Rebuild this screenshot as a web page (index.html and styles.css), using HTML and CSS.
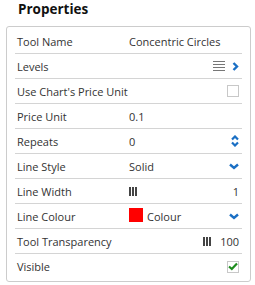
FILE: index.html
```html
<!DOCTYPE html>
<html lang="en">
<head>
    <meta charset="UTF-8">
    <title>Properties</title>
    <link rel="stylesheet" href="styles.css">
</head>
<body>
    <h1>Properties</h1>
    <div class="panel">
        <div class="row">
            <span class="label">Tool Name</span>
            <span class="value">Concentric Circles</span>
        </div>
        <div class="row">
            <span class="label">Levels</span>
            <span class="value"></span>
            <span class="right">
                <svg width="12" height="10" viewBox="0 0 12 10"><path d="M0 0.5H12M0 3.5H12M0 6.5H12M0 9.5H12" stroke="#777" stroke-width="1"/></svg>
                <svg width="7" height="9" viewBox="0 0 7 9"><path d="M1.5 1L5 4.5L1.5 8" fill="none" stroke="#1a6fc4" stroke-width="2.4"/></svg>
            </span>
        </div>
        <div class="row">
            <span class="label">Use Chart's Price Unit</span>
            <span class="value"></span>
            <span class="right"><span class="box"></span></span>
        </div>
        <div class="row">
            <span class="label">Price Unit</span>
            <span class="value">0.1</span>
        </div>
        <div class="row">
            <span class="label">Repeats</span>
            <span class="value">0</span>
            <span class="right">
                <svg width="8" height="12" viewBox="0 0 8 12"><path d="M1 4.5L4 1.5L7 4.5M1 7.5L4 10.5L7 7.5" fill="none" stroke="#1a6fc4" stroke-width="2.2"/></svg>
            </span>
        </div>
        <div class="row">
            <span class="label">Line Style</span>
            <span class="value">Solid</span>
            <span class="right">
                <svg width="10" height="7" viewBox="0 0 10 7"><path d="M1 1.5L5 5L9 1.5" fill="none" stroke="#1a6fc4" stroke-width="2.4"/></svg>
            </span>
        </div>
        <div class="row">
            <span class="label">Line Width</span>
            <span class="value">
                <svg width="8" height="9" viewBox="0 0 8 9"><path d="M1 0V9M4 0V9M7 0V9" stroke="#444" stroke-width="2"/></svg>
            </span>
            <span class="right">1</span>
        </div>
        <div class="row">
            <span class="label">Line Colour</span>
            <span class="value"><span class="swatch"></span>Colour</span>
            <span class="right">
                <svg width="10" height="7" viewBox="0 0 10 7"><path d="M1 1.5L5 5L9 1.5" fill="none" stroke="#1a6fc4" stroke-width="2.4"/></svg>
            </span>
        </div>
        <div class="row">
            <span class="label">Tool Transparency</span>
            <span class="value"></span>
            <span class="right">
                <svg width="8" height="9" viewBox="0 0 8 9"><path d="M1 0V9M4 0V9M7 0V9" stroke="#444" stroke-width="2"/></svg>
                <span class="num">100</span>
            </span>
        </div>
        <div class="row">
            <span class="label">Visible</span>
            <span class="value"></span>
            <span class="right">
                <span class="box">
                    <svg width="10" height="9" viewBox="0 0 10 9"><path d="M1 4.5L3.8 7L9 1.5" fill="none" stroke="#1e8c1e" stroke-width="2.2"/></svg>
                </span>
            </span>
        </div>
    </div>
</body>
</html>
```

FILE: styles.css
```css
* {
    box-sizing: border-box;
}

body {
    margin: 0;
    font-family: "Open Sans", sans-serif;
    color: #333;
    background-color: #fff;
}

h1 {
    margin: 0;
    padding: 0 0 0 18px;
    height: 26px;
    line-height: 18px;
    font-size: 13.5px;
    font-weight: bold;
    color: #111;
}

.panel {
    margin-left: 6px;
    width: 245px;
    padding: 2px 8px;
    border: 1px solid #ccc;
    border-radius: 3px;
}

.row {
    display: grid;
    grid-template-columns: 114px 1fr auto;
    align-items: center;
    height: 25px;
    border-bottom: 1px solid #d4d4d4;
    font-size: 11px;
    white-space: nowrap;
}

.row:last-child {
    border-bottom: none;
}

.label {
    padding-left: 2px;
}

.value {
    display: flex;
    align-items: center;
}

.right {
    display: flex;
    align-items: center;
    gap: 7px;
    padding-right: 3px;
}

.box {
    display: flex;
    align-items: center;
    justify-content: center;
    width: 12px;
    height: 12px;
    border: 1px solid #c8c8c8;
    background: #fff;
}

.swatch {
    width: 14px;
    height: 14px;
    background: #f00;
    margin-right: 4px;
    margin-top: -3px;
}

.num {
    margin-left: 2px;
}
```
